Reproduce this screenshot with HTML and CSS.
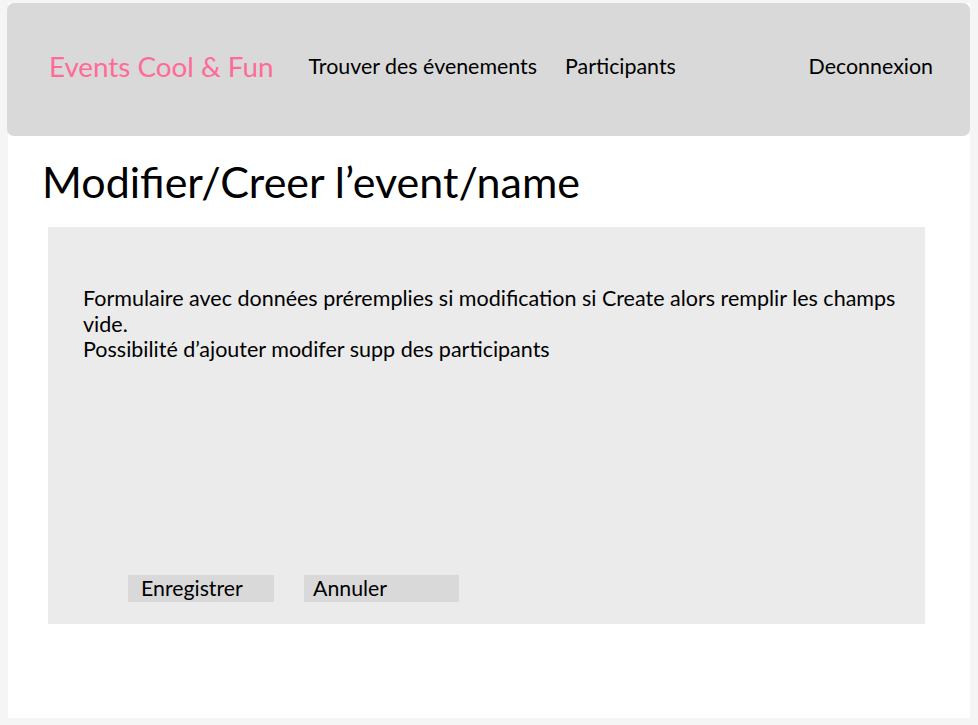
FILE: index.html
```html
<!DOCTYPE html>
<html lang="fr">
<head>
<meta charset="utf-8">
<title>Events Cool &amp; Fun</title>
<link rel="stylesheet" href="styles.css">
</head>
<body>
<div class="page">
  <header class="topbar">
    <div class="brand">Events Cool &amp; Fun</div>
    <nav class="nav">
      <a class="nav-link">Trouver des évenements</a>
      <a class="nav-link">Participants</a>
    </nav>
    <a class="nav-link logout">Deconnexion</a>
  </header>
  <main class="content">
    <h1 class="title">Modifier/Creer l’event/name</h1>
    <section class="panel">
      <p class="desc">Formulaire avec données préremplies si modification si Create alors remplir les champs vide.<br>Possibilité d’ajouter modifer supp des participants</p>
      <div class="actions">
        <button class="btn btn-save">Enregistrer</button>
        <button class="btn btn-cancel">Annuler</button>
      </div>
    </section>
  </main>
</div>
</body>
</html>
```
FILE: styles.css
```css
* { box-sizing: border-box; }
html, body { margin: 0; padding: 0; }
body {
  background: #f5f5f5;
  font-family: Lato, "Open Sans", sans-serif;
  color: #000;
  width: 978px;
  height: 725px;
  overflow: hidden;
}
.page {
  margin: 3px 0 0 8px;
  width: 962px;
  height: 715px;
  background: #fff;
}
.topbar {
  height: 133px;
  margin-left: -1px;
  background: #d9d9d9;
  border-radius: 7px;
  display: flex;
  align-items: center;
  padding: 0 37px 7px 42px;
}
.brand {
  color: #ff6b98;
  font-size: 27.8px;
  margin-right: 35px;
}
.nav { display: flex; gap: 28px; flex: 1; }
.nav-link {
  font-size: 21.4px;
  color: #000;
  text-decoration: none;
}
.content { padding: 20px 0 0 34px; }
.title {
  margin: 0;
  font-weight: 400;
  font-size: 43px;
  line-height: 52px;
}
.panel {
  margin: 19px 0 0 6px;
  width: 877px;
  height: 397px;
  background: #ebebeb;
  padding: 59px 0 0 35px;
  display: flex;
  flex-direction: column;
}
.desc {
  margin: 0;
  font-size: 21.5px;
  line-height: 25.5px;
  width: 830px;
}
.actions {
  margin-top: auto;
  margin-bottom: 22px;
  margin-left: 45px;
  display: flex;
  gap: 30px;
}
.btn {
  font-family: Lato, "Open Sans", sans-serif;
  font-size: 21.3px;
  background: #d9d9d9;
  border: none;
  height: 27px;
  line-height: 27px;
  text-align: left;
  padding: 0 0 0 13px;
  color: #000;
}
.btn-save { width: 146px; }
.btn-cancel { width: 155px; padding-left: 9px; }
```
